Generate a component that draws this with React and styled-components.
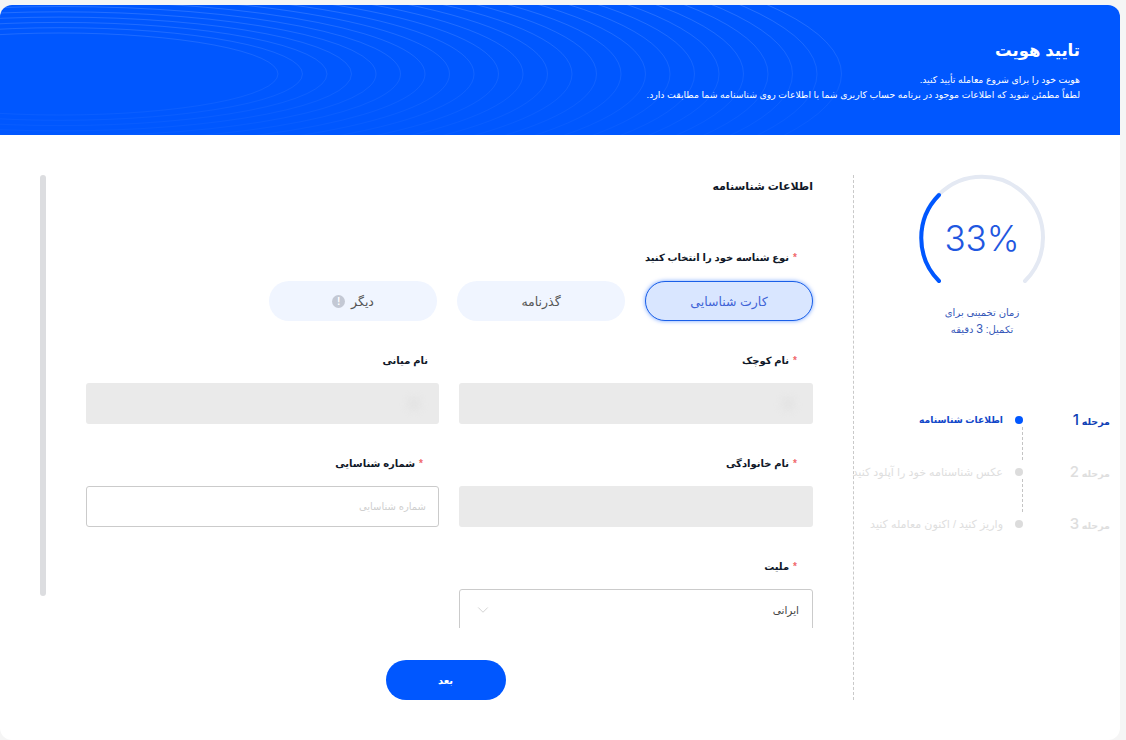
import React from "react";
import styled, { createGlobalStyle } from "styled-components";
import { ChevronDown } from "lucide-react";

const GlobalStyle = createGlobalStyle`
html, body {
    margin: 0;
    padding: 0;
    height: 100%;
    background: #f5f5f5;
    font-family: "Liberation Sans", "DejaVu Sans", sans-serif;
}
* {
    box-sizing: border-box;
}
`;

const RINGS = Array.from({ length: 24 }, (_, i) => i);

const STEPS = [
    { num: 1, title: "اطلاعات شناسنامه", active: true },
    { num: 2, title: "عکس شناسنامه خود را آپلود کنید" },
    { num: 3, title: "واریز کنید / اکنون معامله کنید" },
];

function Rings() {
    return (
        <RingArt viewBox="0 0 1120 130" aria-hidden="true">
            <defs>
                <linearGradient id="ringFade" gradientUnits="userSpaceOnUse" x1="0" y1="0" x2="0" y2="130">
                    <stop offset="0" stopColor="#fff" stopOpacity="0.15" />
                    <stop offset="0.55" stopColor="#fff" stopOpacity="0.07" />
                    <stop offset="1" stopColor="#fff" stopOpacity="0.025" />
                </linearGradient>
            </defs>
            {RINGS.map(i => (
                <ellipse key={i} cx="60" cy="69" rx={218 + 24.5 * i} ry={41 + 5.3 * i} fill="none" stroke="url(#ringFade)" strokeWidth="1" />
            ))}
        </RingArt>
    );
}

function Gauge() {
    return (
        <GaugeWrap>
            <svg width="128" height="128" viewBox="0 0 128 128">
                <path d="M 21 107 A 61 61 0 1 1 107 107" fill="none" stroke="#e4e9f3" strokeWidth="4" strokeLinecap="round" />
                <path d="M 21 107 A 61 61 0 0 1 21 21" fill="none" stroke="#0057ff" strokeWidth="4" strokeLinecap="round" />
            </svg>
            <GaugeValue>33%</GaugeValue>
        </GaugeWrap>
    );
}

export default function App() {
    return (
        <Page dir="rtl">
            <GlobalStyle />
            <Card>
                <Banner>
                    <Rings />
                    <BannerTitle>تایید هویت</BannerTitle>
                    <BannerText>هویت خود را برای شروع معامله تأیید کنید.</BannerText>
                    <BannerText>لطفاً مطمئن شوید که اطلاعات موجود در برنامه حساب کاربری شما با اطلاعات روی شناسنامه شما مطابقت دارد.</BannerText>
                </Banner>
                <Body>
                    <Sidebar>
                        <Gauge />
                        <EstimateText>زمان تخمینی برای<br />تکمیل: <Digit>3</Digit> دقیقه</EstimateText>
                        <Steps>
                            {STEPS.map((step, i) => (
                                <Step key={step.num}>
                                    <StepNum $active={step.active}>مرحله <b>{step.num}</b></StepNum>
                                    <StepDot $active={step.active} $line={i < STEPS.length - 1} />
                                    <StepTitle $active={step.active}>{step.title}</StepTitle>
                                </Step>
                            ))}
                        </Steps>
                    </Sidebar>
                    <Main>
                        <ScrollArea>
                            <FormBody>
                                <SectionTitle>اطلاعات شناسنامه</SectionTitle>
                                <FieldLabel $required $first>نوع شناسه خود را انتخاب کنید</FieldLabel>
                                <TypeRow>
                                    <TypeButton $selected>کارت شناسایی</TypeButton>
                                    <TypeButton>گذرنامه</TypeButton>
                                    <TypeButton>
                                        دیگر
                                        <InfoBadge>!</InfoBadge>
                                    </TypeButton>
                                </TypeRow>
                                <FieldGrid>
                                    <Field>
                                        <FieldLabel $required>نام کوچک</FieldLabel>
                                        <DisabledInput $blob />
                                    </Field>
                                    <Field>
                                        <FieldLabel>نام میانی</FieldLabel>
                                        <DisabledInput $blob />
                                    </Field>
                                    <Field>
                                        <FieldLabel $required>نام خانوادگی</FieldLabel>
                                        <DisabledInput />
                                    </Field>
                                    <Field>
                                        <FieldLabel $required>شماره شناسایی</FieldLabel>
                                        <TextInput placeholder="شماره شناسایی" />
                                    </Field>
                                    <Field>
                                        <FieldLabel $required>ملیت</FieldLabel>
                                        <SelectBox>
                                            <span>ایرانی</span>
                                            <ChevronDown size={18} strokeWidth={1} color="#c4c4c4" />
                                        </SelectBox>
                                    </Field>
                                </FieldGrid>
                            </FormBody>
                            <ScrollThumb />
                        </ScrollArea>
                        <Footer>
                            <NextButton>بعد</NextButton>
                        </Footer>
                    </Main>
                </Body>
            </Card>
        </Page>
    );
}

const Page = styled.div`
width: 1126px;
height: 740px;
padding: 5px 6px 0 0;
overflow: hidden;
display: flex;
justify-content: flex-end;
`;

const Card = styled.div`
width: 1120px;
height: 735px;
background: #fff;
border-radius: 12px;
overflow: hidden;
display: flex;
flex-direction: column;
`;

const Banner = styled.header`
position: relative;
height: 130px;
flex-shrink: 0;
background: #0057ff;
color: #fff;
padding: 33px 40px 0 0;
overflow: hidden;
`;

const RingArt = styled.svg`
position: absolute;
left: 0;
top: 0;
width: 1120px;
height: 130px;
`;

const BannerTitle = styled.h1`
position: relative;
margin: 0 0 11px;
font-size: 16.5px;
line-height: 24px;
font-weight: 700;
`;

const BannerText = styled.p`
position: relative;
margin: 0;
font-size: 9.3px;
line-height: 15px;
`;

const Body = styled.div`
flex: 1;
display: flex;
padding: 40px 0 40px 40px;
min-height: 0;
`;

const Sidebar = styled.aside`
width: 267px;
flex-shrink: 0;
padding-right: 10px;
border-left: 1px dashed #c9c9c9;
display: flex;
flex-direction: column;
align-items: center;
`;

const GaugeWrap = styled.div`
position: relative;
width: 128px;
height: 128px;
margin-top: -1px;
`;

const GaugeValue = styled.div`
position: absolute;
inset: 0;
direction: ltr;
display: flex;
align-items: center;
justify-content: center;
color: #1f57e0;
font-size: 35px;
font-weight: 300;
font-family: Inter, "Liberation Sans", sans-serif;
`;

const EstimateText = styled.p`
margin: 2px 0 0;
text-align: center;
font-size: 10px;
line-height: 17px;
color: #3557b8;
`;

const Digit = styled.span`
font-size: 12px;
`;

const Steps = styled.ol`
list-style: none;
margin: 74px 0 0;
padding: 0;
width: 100%;
`;

const Step = styled.li`
height: 52px;
display: flex;
align-items: flex-start;
white-space: nowrap;
`;

const StepNum = styled.span`
width: 87px;
flex-shrink: 0;
font-size: 9.5px;
line-height: 16px;
font-weight: 700;
color: ${props => props.$active ? "#0f3fb5" : "#dedede"};

b {
    font-family: Inter, "Liberation Sans", sans-serif;
    font-size: 15px;
    font-weight: 500;
}
`;

const StepDot = styled.span`
position: relative;
width: 8px;
height: 8px;
margin: 4px 0 0 12px;
flex-shrink: 0;
border-radius: 50%;
background: ${props => props.$active ? "#0057ff" : "#dcdcdc"};

&::after {
    content: "";
    display: ${props => props.$line ? "block" : "none"};
    position: absolute;
    top: 11px;
    right: 0;
    height: 33px;
    border-right: 1px dashed #c4c4c4;
}
`;

const StepTitle = styled.span`
font-size: ${props => props.$active ? "9.2px" : "11.1px"};
line-height: 16px;
font-weight: ${props => props.$active ? 700 : 400};
color: ${props => props.$active ? "#1247c9" : "#dedede"};
`;

const Main = styled.main`
flex: 1;
min-width: 0;
display: flex;
flex-direction: column;
`;

const ScrollArea = styled.div`
height: 453px;
overflow: hidden;
display: flex;
`;

const FormBody = styled.div`
flex: 1;
min-width: 0;
padding: 0 40px 0 40px;
`;

const ScrollThumb = styled.div`
width: 6px;
height: 421px;
flex-shrink: 0;
border-radius: 3px;
background: #dcdde0;
`;

const SectionTitle = styled.h2`
margin: 3px 0 0;
font-size: 11px;
line-height: 16px;
font-weight: 700;
color: #101828;
`;

const FieldLabel = styled.label`
display: block;
margin: ${props => props.$first ? "57px 0 16px" : "0 0 15px"};
padding-right: ${props => props.$required ? "16px" : "11px"};
font-size: 10px;
line-height: 14px;
font-weight: 700;
color: #101828;

${props => props.$required && `
&::before {
    content: "*";
    color: #f0686a;
    margin-left: 4px;
}
`}
`;

const TypeRow = styled.div`
display: flex;
gap: 20px;
margin-bottom: 33px;
`;

const TypeButton = styled.button`
width: 168px;
height: 40px;
display: flex;
align-items: center;
justify-content: center;
gap: 6px;
border-radius: 20px;
font-family: inherit;
font-size: 12.5px;
color: ${props => props.$selected ? "#3f63d6" : "#555"};
background: ${props => props.$selected ? "#d9e6ff" : "#f0f5ff"};
border: ${props => props.$selected ? "1px solid #1a5fe8" : "none"};
box-shadow: ${props => props.$selected ? "0 0 4px rgba(0, 87, 255, 0.55)" : "none"};
`;

const InfoBadge = styled.span`
width: 13px;
height: 13px;
border-radius: 50%;
background: #c3c8d4;
color: #fff;
font-size: 10px;
font-weight: 700;
line-height: 13px;
text-align: center;
`;

const FieldGrid = styled.div`
display: grid;
grid-template-columns: 354px 353px;
column-gap: 20px;
row-gap: 33px;
`;

const Field = styled.div`
min-width: 0;
`;

const DisabledInput = styled.div`
position: relative;
height: 41px;
border-radius: 3px;
background: #eaeaea;

${props => props.$blob && `
&::after {
    content: "";
    position: absolute;
    top: 14px;
    right: 18px;
    width: 14px;
    height: 14px;
    border-radius: 50%;
    background: #e4e4e4;
    filter: blur(3px);
}
`}
`;

const TextInput = styled.input`
display: block;
width: 100%;
height: 41px;
padding: 0 12px;
border: 1px solid #cbcbcb;
border-radius: 3px;
background: #fff;
font-family: inherit;
font-size: 10px;
outline: none;

&::placeholder {
    color: #cfcfcf;
}
`;

const SelectBox = styled.div`
height: 60px;
padding: 11px 13px 0 14px;
border: 1px solid #cbcbcb;
border-radius: 3px;
display: flex;
align-items: flex-start;
justify-content: space-between;
font-size: 10.5px;
line-height: 18px;
color: #444;
`;

const Footer = styled.div`
flex: 1;
display: flex;
justify-content: center;
align-items: flex-end;
padding-right: 2px;
`;

const NextButton = styled.button`
width: 120px;
height: 40px;
border: none;
border-radius: 20px;
background: #0057ff;
color: #fff;
font-family: inherit;
font-size: 10px;
font-weight: 700;
`;
